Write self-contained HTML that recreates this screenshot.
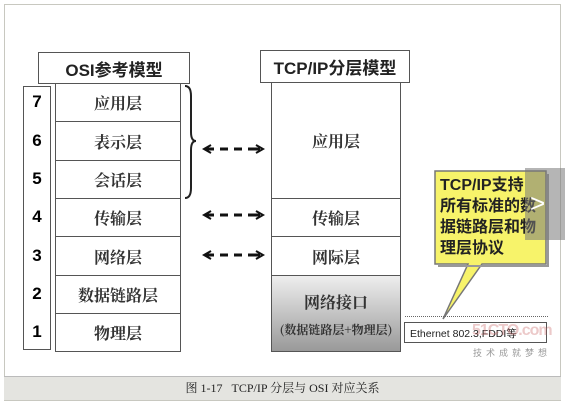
<!DOCTYPE html><html><head><meta charset="utf-8"><style>
body{margin:0;width:565px;height:405px;background:#fff;position:relative;overflow:hidden;font-family:"Liberation Sans","Noto Sans CJK SC",sans-serif}
.a{position:absolute;box-sizing:border-box}
.b{border:1.5px solid #555;background:#fff;display:flex;align-items:center;justify-content:center;font-family:"Noto Serif CJK SC","Noto Sans CJK SC",serif;font-weight:bold;font-size:16px;color:#333}
.n{font-weight:bold;font-size:17px;position:absolute;left:30px;width:14px;text-align:center}
</style></head><body>
<div class="a" style="left:4px;top:4px;width:557px;height:397px;border:1.5px solid #c8c8c0"></div>
<div class="a b" style="left:38px;top:52px;width:152px;height:32px;font-family:'Liberation Sans','Noto Sans CJK SC',sans-serif;font-weight:bold;font-size:17px;color:#222">OSI参考模型</div>
<div class="a" style="left:23px;top:86px;width:28px;height:264px;border:1.5px solid #555"></div>
<div class="n" style="top:92px">7</div><div class="n" style="top:131px">6</div><div class="n" style="top:169px">5</div><div class="n" style="top:207px">4</div><div class="n" style="top:246px">3</div><div class="n" style="top:284px">2</div><div class="n" style="top:322px">1</div>
<div class="a b" style="left:55px;top:83px;width:126px;height:39px">应用层</div>
<div class="a b" style="left:55px;top:121px;width:126px;height:40px">表示层</div>
<div class="a b" style="left:55px;top:160px;width:126px;height:39px">会话层</div>
<div class="a b" style="left:55px;top:198px;width:126px;height:39px">传输层</div>
<div class="a b" style="left:55px;top:236px;width:126px;height:40px">网络层</div>
<div class="a b" style="left:55px;top:275px;width:126px;height:39px">数据链路层</div>
<div class="a b" style="left:55px;top:313px;width:126px;height:39px">物理层</div>
<svg class="a" style="left:183px;top:84px" width="16" height="118"><path d="M2 2 Q8 2 8 12 L8 48 Q8 57 13 57 Q8 57 8 66 L8 104 Q8 114 2 114" fill="none" stroke="#222" stroke-width="2"/></svg>
<svg class="a" style="left:200px;top:140px" width="70" height="130"><g stroke="#111" stroke-width="3" fill="none"><path d="M6 9H14M20 9H28M34 9H42M48 9H60"/><path d="M11 5L4 9L11 13M56 5L63 9L56 13" stroke-width="2"/><path d="M6 75H14M20 75H28M34 75H42M48 75H60"/><path d="M11 71L4 75L11 79M56 71L63 75L56 79" stroke-width="2"/><path d="M6 115H14M20 115H28M34 115H42M48 115H60"/><path d="M11 111L4 115L11 119M56 111L63 115L56 119" stroke-width="2"/></g></svg>
<div class="a b" style="left:260px;top:50px;width:150px;height:33px;font-family:'Liberation Sans','Noto Sans CJK SC',sans-serif;font-weight:bold;font-size:17px;color:#222">TCP/IP分层模型</div>
<div class="a b" style="left:271px;top:82px;width:130px;height:117px">应用层</div>
<div class="a b" style="left:271px;top:198px;width:130px;height:39px">传输层</div>
<div class="a b" style="left:271px;top:236px;width:130px;height:40px">网际层</div>
<div class="a b" style="left:271px;top:275px;width:130px;height:77px;flex-direction:column;background:linear-gradient(#eee,#999);font-weight:bold"><div>网络接口</div><div style="font-size:12px;margin-top:8px">(数据链路层+物理层)</div></div>
<svg class="a" style="left:430px;top:166px" width="125" height="160"><path d="M5 5H116V98H52L13 153L38 98H5Z" fill="#f7f36a" stroke="#777" stroke-width="1.5"/><path d="M8 100H118V8" fill="none" stroke="#999" stroke-width="2"/></svg>
<div class="a" style="left:440px;top:175px;width:110px;font-weight:bold;font-size:16px;line-height:21px;color:#222;font-family:'Liberation Sans','Noto Sans CJK SC',sans-serif;white-space:nowrap">TCP/IP支持<br>所有标准的数<br>据链路层和物<br>理层协议</div>
<div class="a" style="left:525px;top:168px;width:40px;height:72px;background:rgba(120,120,120,.55)"></div>
<div class="a" style="left:530px;top:188px;color:#fff;font-size:26px">&gt;</div>
<div class="a" style="left:405px;top:316px;width:143px;border-top:1.5px dotted #666"></div>
<div class="a" style="left:404px;top:322px;width:143px;height:21px;border:1.5px solid #555;font-size:10.5px;padding:3px 0 0 5px;color:#222">Ethernet 802.3,FDDI等</div>
<div class="a" style="left:472px;top:322px;font-size:16px;font-weight:bold;color:rgba(200,100,100,.35);letter-spacing:-1px;white-space:nowrap">51CTO.com</div>
<div class="a" style="left:473px;top:346px;font-size:9px;color:#999;letter-spacing:4px">技术成就梦想</div>
<div class="a" style="left:4px;top:376px;width:557px;height:24px;background:#e4e4e0;border-top:1px solid #bbb;text-align:center;font-family:'Liberation Serif','Noto Serif CJK SC',serif;font-size:12px;line-height:22px;color:#222">图 1-17 &nbsp; TCP/IP 分层与 OSI 对应关系</div>
</body></html>
